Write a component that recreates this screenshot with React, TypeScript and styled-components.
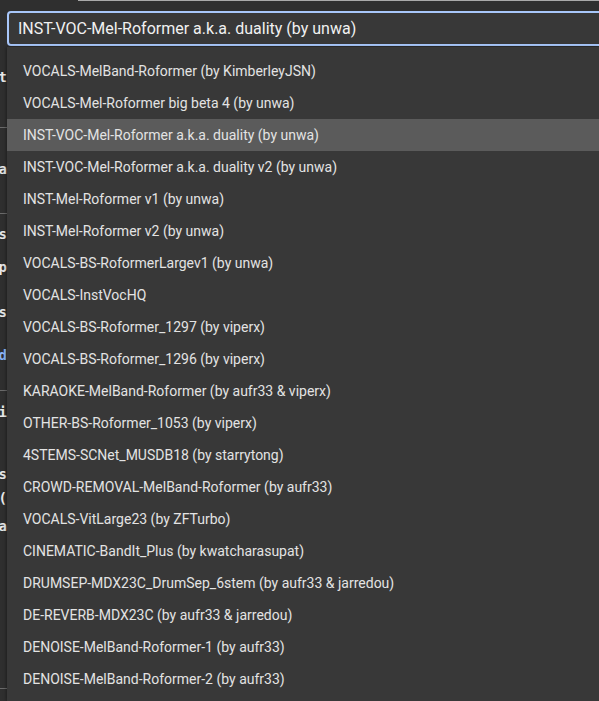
import React from "react";
import styled, { createGlobalStyle } from "styled-components";

const GlobalStyle = createGlobalStyle`
  html, body {
    margin: 0;
    padding: 0;
    background: #2f2f2f;
    height: 100%;
    overflow: hidden;
  }
  #root {
    height: 100%;
  }
`;

const models = [
  "VOCALS-MelBand-Roformer (by KimberleyJSN)",
  "VOCALS-Mel-Roformer big beta 4 (by unwa)",
  "INST-VOC-Mel-Roformer a.k.a. duality (by unwa)",
  "INST-VOC-Mel-Roformer a.k.a. duality v2 (by unwa)",
  "INST-Mel-Roformer v1 (by unwa)",
  "INST-Mel-Roformer v2 (by unwa)",
  "VOCALS-BS-RoformerLargev1 (by unwa)",
  "VOCALS-InstVocHQ",
  "VOCALS-BS-Roformer_1297 (by viperx)",
  "VOCALS-BS-Roformer_1296 (by viperx)",
  "KARAOKE-MelBand-Roformer (by aufr33 & viperx)",
  "OTHER-BS-Roformer_1053 (by viperx)",
  "4STEMS-SCNet_MUSDB18 (by starrytong)",
  "CROWD-REMOVAL-MelBand-Roformer (by aufr33)",
  "VOCALS-VitLarge23 (by ZFTurbo)",
  "CINEMATIC-BandIt_Plus (by kwatcharasupat)",
  "DRUMSEP-MDX23C_DrumSep_6stem (by aufr33 & jarredou)",
  "DE-REVERB-MDX23C (by aufr33 & jarredou)",
  "DENOISE-MelBand-Roformer-1 (by aufr33)",
  "DENOISE-MelBand-Roformer-2 (by aufr33)",
];

const selected = 2;

// bits of the page underneath that peek out on the left edge
const fragments: { top: number; text?: string; rule?: boolean; link?: boolean }[] = [
  { top: 67, text: "Format" },
  { top: 126, rule: true },
  { top: 159, text: "Extra" },
  { top: 212, rule: true },
  { top: 224, text: "Filters" },
  { top: 257, text: "Step" },
  { top: 302, text: "Options" },
  { top: 345, text: "Read", link: true },
  { top: 389, rule: true },
  { top: 402, text: "Overri" },
  { top: 464, text: "Files" },
  { top: 488, text: "(" },
  { top: 516, text: "Filena" },
  { top: 687, rule: true },
];

const Page = styled.div`
  position: relative;
  height: 100%;
  font-family: Roboto, "Noto Sans", sans-serif;
`;

const TopEdge = styled.div`
  margin-left: 78px;
  height: 1px;
  background: #a9a9a9;
`;

const Backdrop = styled.div`
  position: relative;
  width: 7px;
  height: 700px;
  overflow: hidden;
`;

const Fragment = styled.div<{ $top: number; $link?: boolean }>`
  position: absolute;
  top: ${(p) => p.$top}px;
  right: 0;
  display: flex;
  justify-content: flex-end;
  white-space: nowrap;
  font-family: "DejaVu Sans Mono", monospace;
  font-weight: bold;
  font-size: 14px;
  line-height: 18px;
  color: ${(p) => (p.$link ? "#8ab4f8" : "#e8e8e8")};
`;

const Rule = styled.div<{ $top: number }>`
  position: absolute;
  top: ${(p) => p.$top}px;
  left: 0;
  width: 7px;
  height: 1px;
  background: #6a6a6a;
`;

const Field = styled.div`
  position: absolute;
  top: 11px;
  left: 7px;
  right: -10px;
  height: 35px;
  box-sizing: border-box;
  border: 2px solid #a8c7fa;
  border-radius: 4px;
  background: #383838;
  display: flex;
  align-items: center;
  padding-left: 9px;
  color: #f1f1f1;
  font-size: 16px;
  white-space: nowrap;
`;

const Menu = styled.ul`
  position: absolute;
  top: 47px;
  left: 7px;
  right: 0;
  bottom: 0;
  margin: 0;
  padding: 8px 0 0;
  list-style: none;
  background: #383838;
  box-shadow: -1px 0 3px rgba(0, 0, 0, 0.35);
  overflow: hidden;
`;

const Option = styled.li<{ $active?: boolean }>`
  height: 32px;
  display: flex;
  align-items: center;
  padding-left: 16px;
  font-size: 14px;
  color: #e3e3e3;
  white-space: nowrap;
  background: ${(p) => (p.$active ? "#5b5b5b" : "transparent")};
`;

export default function App() {
  return (
    <>
      <GlobalStyle />
      <Page>
        <TopEdge />
        <Backdrop>
          {fragments.map((f, i) =>
            f.rule ? (
              <Rule key={i} $top={f.top} />
            ) : (
              <Fragment key={i} $top={f.top} $link={f.link}>
                {f.text}
              </Fragment>
            )
          )}
        </Backdrop>
        <Field>{models[selected]}</Field>
        <Menu>
          {models.map((m, i) => (
            <Option key={m} $active={i === selected}>
              {m}
            </Option>
          ))}
        </Menu>
      </Page>
    </>
  );
}
